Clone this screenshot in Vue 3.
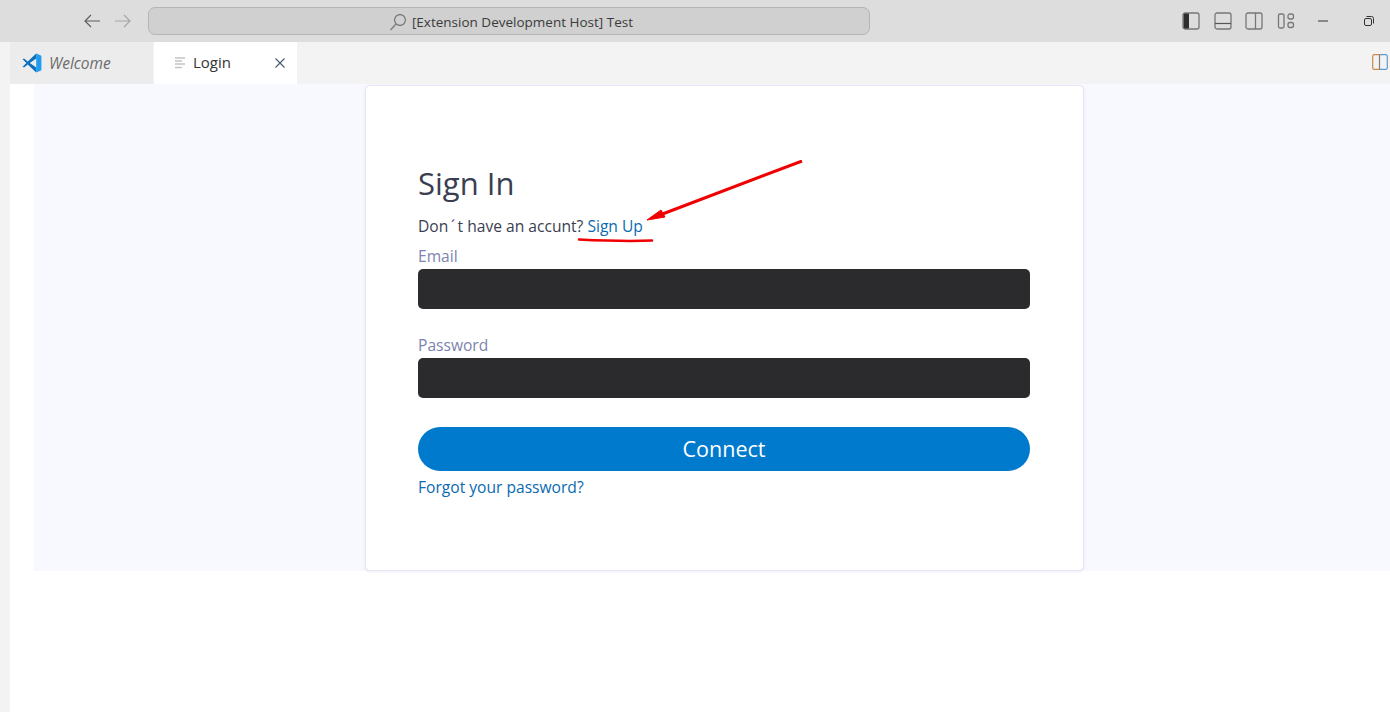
<script setup>
const layoutIcons = ['left', 'bottom', 'right']
</script>

<template>
  <div class="window">
    <header class="titlebar">
      <div class="nav">
        <svg class="nav-icon" width="18" height="16" viewBox="0 0 18 16"><path d="M17 8H2M8 2 2 8l6 6" fill="none" stroke="#5f5f5f" stroke-width="1.2"/></svg>
        <svg class="nav-icon" width="18" height="16" viewBox="0 0 18 16"><path d="M1 8h15M10 2l6 6-6 6" fill="none" stroke="#a6a6a6" stroke-width="1.2"/></svg>
      </div>
      <div class="command">
        <svg class="search" width="18" height="18" viewBox="0 0 18 18"><circle cx="11" cy="7" r="5.4" fill="none" stroke="#6b6b6b" stroke-width="1.1"/><path d="M7 11 1.5 17" stroke="#7a7a7a" stroke-width="1.2"/></svg>
        <span>[Extension Development Host] Test</span>
      </div>
      <div class="actions">
        <svg v-for="n in layoutIcons" :key="n" width="18" height="18" viewBox="0 0 18 18">
          <rect x="1" y="1" width="16" height="16" rx="2" fill="none" stroke="#777" stroke-width="1.3"/>
          <path v-if="n === 'left'" d="M1.6 2.5a1 1 0 0 1 1-1H7v15H2.6a1 1 0 0 1-1-1z" fill="#2d2d2d"/>
          <path v-if="n === 'bottom'" d="M1 11.5h16" stroke="#555" stroke-width="1.2"/>
          <path v-if="n === 'right'" d="M10.5 1v16" stroke="#777" stroke-width="1.3"/>
        </svg>
        <svg width="18" height="18" viewBox="0 0 18 18">
          <rect x="1.500" y="2" width="5.500" height="14" rx="1.500" fill="none" stroke="#777" stroke-width="1.3"/>
          <rect x="11" y="2" width="5.500" height="5" rx="2" fill="none" stroke="#777" stroke-width="1.3"/>
          <rect x="11" y="10.500" width="5.500" height="5" rx="2" fill="none" stroke="#777" stroke-width="1.3"/>
        </svg>
        <svg class="minimize" width="10" height="10" viewBox="0 0 10 10"><path d="M0 5h10" stroke="#333" stroke-width="1"/></svg>
        <svg class="restore" width="10" height="10" viewBox="0 0 10 10"><rect x=".5" y="2.500" width="7" height="7" rx="1.500" fill="none" stroke="#333"/><path d="M2.500 .5h5a2 2 0 0 1 2 2v5" fill="none" stroke="#333"/></svg>
      </div>
    </header>

    <div class="workbench">
      <div class="tabs">
        <div class="tab welcome">
          <svg width="20" height="20" viewBox="0 0 100 100">
            <path d="M71 2 29 42 10 27 3 31 22 50 3 69l7 4 19-15 42 40V72L39 50l32-22z" fill="#0a70bd"/>
            <path d="M71 2 97 14v72L71 98z" fill="#1f9cf0"/>
          </svg>
          <span>Welcome</span>
        </div>
        <div class="tab login">
          <svg class="file" width="11" height="12" viewBox="0 0 11 12"><path d="M0 1h10M0 4h7M0 7h10M0 10.500h7" stroke="#c4c4c4" stroke-width="1.5"/></svg>
          <span class="login-name">Login</span>
          <svg class="close" width="10" height="10" viewBox="0 0 10 10"><path d="m.5.5 9 9m0-9-9 9" stroke="#44586b" stroke-width="1.1"/></svg>
        </div>
        <svg class="split" width="16" height="16" viewBox="0 0 16 16">
          <path d="M8 .7H2.200A1.500 1.500 0 0 0 .7 2.200v11.600a1.500 1.500 0 0 0 1.500 1.500H8" fill="none" stroke="#c98b4a" stroke-width="1.200"/>
          <path d="M8 .7h5.800a1.500 1.500 0 0 1 1.500 1.500v11.600a1.500 1.500 0 0 1-1.500 1.500H8" fill="none" stroke="#5c9bd0" stroke-width="1.200"/>
          <path d="M7.500 1v14" stroke="#7f7f7f" stroke-width="1.200"/>
        </svg>
      </div>

      <main class="editor">
        <section class="band">
          <form class="card" @submit.prevent>
            <h1>Sign In</h1>
            <p class="hint">Don<span class="acute">´</span>t have an accunt? <a href="#">Sign Up</a></p>
            <label for="email">Email</label>
            <input id="email" type="text" />
            <label class="password-label" for="password">Password</label>
            <input id="password" type="password" />
            <button type="submit">Connect</button>
            <a class="forgot" href="#">Forgot your password?</a>
          </form>
        </section>
      </main>
    </div>

    <svg class="annotation" width="240" height="100" viewBox="0 0 240 100">
      <path d="M232 1 82 58" stroke="#f00000" stroke-width="3" fill="none"/>
      <path d="M77 60 91 50 95 57z" fill="#f00000" stroke="#f00000" stroke-width="1"/>
      <path d="M9 79.500c20 1 50 2 73 1" stroke="#f00000" stroke-width="2.600" fill="none" stroke-linecap="round"/>
    </svg>
  </div>
</template>

<style scoped>
.window {
  position: relative;
  width: 1390px;
  height: 712px;
  overflow: hidden;
  background: #fff;
  font-family: "Open Sans", "Noto Sans", sans-serif;
}
.titlebar {
  display: flex;
  align-items: center;
  height: 42px;
  background: #dddddd;
  box-sizing: border-box;
}
.nav {
  display: flex;
  gap: 13px;
  margin-left: 83px;
  width: 65px;
}
.command {
  display: flex;
  align-items: center;
  justify-content: center;
  gap: 5px;
  box-sizing: border-box;
  width: 722px;
  height: 28px;
  border: 1px solid #b5b5b5;
  border-radius: 7px;
  background: #d0d0d0;
  color: #3b3b3b;
  font-size: 13.500px;
  padding-left: 4px;
  padding-top: 1px;
}
.actions {
  display: flex;
  align-items: center;
  gap: 13.500px;
  margin-left: 312px;
}
.minimize { margin-left: 10px; }
.restore { margin-left: 22.500px; }
.workbench {
  height: 670px;
  background: #f3f3f3;
  padding-left: 10px;
  box-sizing: border-box;
}
.tabs {
  position: relative;
  display: flex;
  height: 42px;
}
.tab {
  display: flex;
  align-items: center;
  box-sizing: border-box;
  width: 143px;
  height: 42px;
  font-size: 15px;
}
.welcome {
  background: #ececec;
  color: #6c6c6c;
  font-style: italic;
  font-size: 15.500px;
  padding-left: 12px;
  gap: 7px;
  margin-right: 1px;
}
.login {
  background: #fff;
  color: #333;
  padding-left: 21px;
}
.login-name { margin-top: -2px; }
.file { margin-right: 7px; }
.close { margin-left: auto; margin-right: 12px; }
.split {
  position: absolute;
  right: 2px;
  top: 12px;
}
.editor {
  height: 628px;
  background: #fff;
  padding-left: 24px;
}
.band {
  display: flex;
  justify-content: center;
  align-items: flex-start;
  width: 1381px;
  height: 487px;
  background: #f8f9ff;
}
.card {
  display: flex;
  flex-direction: column;
  align-items: flex-start;
  box-sizing: border-box;
  width: 719px;
  height: 486px;
  margin-top: 1px;
  padding: 75px 52px 0;
  background: #fff;
  border: 1px solid #e6e6f4;
  border-radius: 5px;
  box-shadow: 0 1px 3px rgba(110, 110, 190, 0.14);
}
h1 {
  margin: 0;
  font-size: 31px;
  line-height: 44px;
  font-weight: 400;
  color: #3a3e50;
}
.hint {
  margin: 10px 0 0;
  font-size: 15.600px;
  line-height: 22px;
  color: #3a3e50;
}
.acute { padding: 0 2.500px; }
a {
  color: #0a6ab0;
  text-decoration: none;
}
label {
  margin-top: 8px;
  font-size: 15.600px;
  line-height: 22px;
  color: #7d83ae;
}
.password-label { margin-top: 25px; }
input {
  display: block;
  box-sizing: border-box;
  width: 612px;
  height: 40px;
  margin-top: 2px;
  border: 0;
  border-radius: 5px;
  background: #2b2b2d;
  outline: 0;
}
button {
  width: 612px;
  height: 44px;
  margin-top: 29px;
  padding: 0 0 2px;
  border: 0;
  border-radius: 22px;
  background: #007acc;
  color: #fff;
  font: 400 21.500px "Open Sans", "Noto Sans", sans-serif;
}
.forgot {
  margin-top: 5px;
  font-size: 15.600px;
  line-height: 22px;
}
.annotation {
  position: absolute;
  left: 570px;
  top: 160px;
  pointer-events: none;
}
</style>

<style>
html, body { margin: 0; overflow: hidden; }
</style>
